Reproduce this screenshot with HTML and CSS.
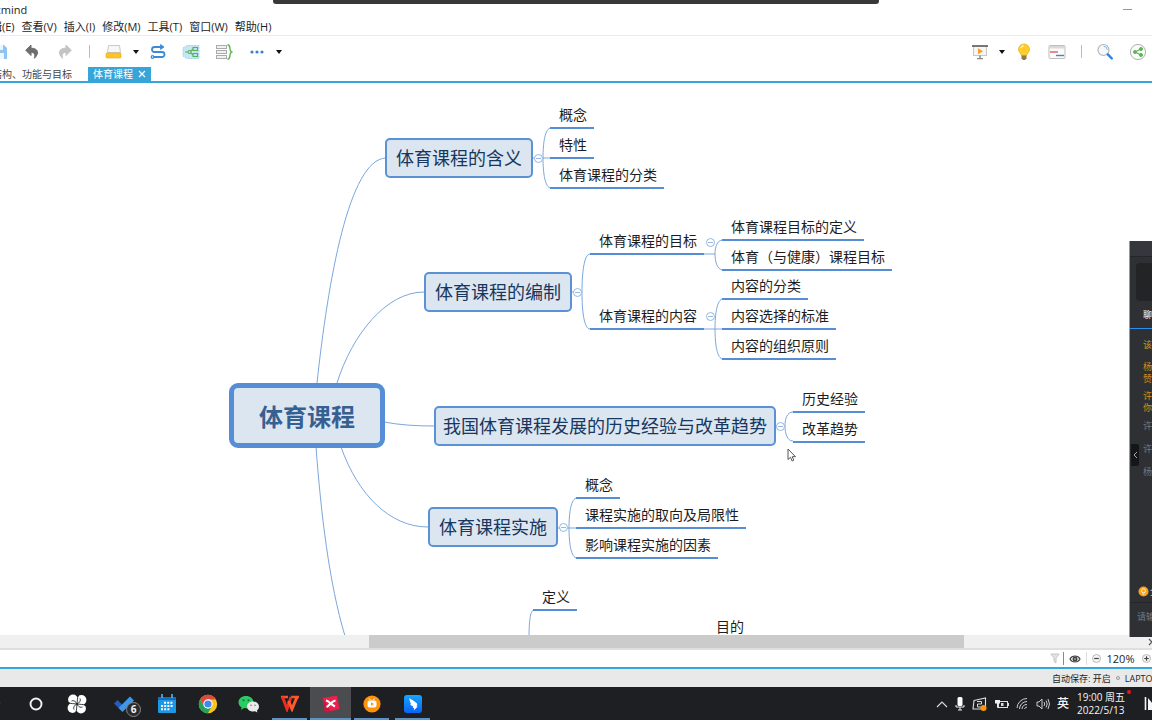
FILE: index.html
```html
<!DOCTYPE html>
<html lang="zh-CN">
<head>
<meta charset="utf-8">
<title>体育课程.xmind</title>
<link rel="stylesheet" href="styles.css">
</head>
<body>
<div class="app">
  <div class="share-bar"></div>
  <header class="titlebar">
    <span class="titlebar-name">xmind</span>
    <button class="win-btn" aria-label="最小化"><span class="win-min"></span></button>
    <button class="win-btn win-btn-edge" aria-label="最大化"><span class="win-max"></span></button>
  </header>

  <nav class="menubar">
    <button>编辑(E)</button><button>查看(V)</button><button>插入(I)</button><button>修改(M)</button><button>工具(T)</button><button>窗口(W)</button><button>帮助(H)</button>
  </nav>

  <div class="toolbar">
    <div class="tools tools-left">
      <button class="tool" aria-label="保存"><svg width="18" height="16" viewBox="0 0 18 16"><path d="M1 1h13l3 3v11H1z" fill="#8fc3f3"/><path d="M4 1h9v5H4zM4 9h10v6H4z" fill="#eef6fd"/></svg></button>
      <button class="tool" aria-label="撤销"><svg width="14" height="15" viewBox="0 0 14 15"><path d="M6 1L.7 6.200 6 11.500V8.300c3.200 0 4.500 2 3.400 6C14.500 9.500 13.500 4.200 6 4.200z" fill="#6e6e6e" stroke="#6e6e6e" stroke-linejoin="round"/></svg></button>
      <button class="tool" aria-label="重做"><svg width="14" height="15" viewBox="0 0 14 15"><path d="M8 1l5.300 5.200L8 11.500V8.300c-3.200 0-4.500 2-3.400 6C-.5 9.500.5 4.200 8 4.200z" fill="#c4c4c4" stroke="#c4c4c4" stroke-linejoin="round"/></svg></button>
      <span class="tool-sep"></span>
      <button class="tool" aria-label="主题"><svg width="18" height="16" viewBox="0 0 18 16"><path d="M3.500 1.500h11l1 7h-13z" fill="#f7f7f7" stroke="#c9c9c9"/><rect x="1" y="9" width="15" height="5" rx="1" fill="#ffc423" stroke="#e5ab1c" stroke-width=".6"/></svg></button>
      <button class="caret" aria-label="更多主题"></button>
      <button class="tool" aria-label="联系"><svg width="18" height="16" viewBox="0 0 18 16" fill="none" stroke="#3c8ad8" stroke-width="1.800"><path d="M14 3H5.500a2.500 2.500 0 000 5H13a2.500 2.500 0 010 5H5"/><path d="M11.500 .5L15 3l-3.500 2.500z" fill="#3c8ad8" stroke-width=".8"/><circle cx="3.500" cy="13" r="1.300" stroke-width="1.200"/></svg></button>
      <button class="tool" aria-label="外框"><svg width="18" height="16" viewBox="0 0 18 16"><path d="M1 4l4-2.500h12v13H5L1 12z" fill="#c6e6f4" stroke="#9ed2ea" stroke-dasharray="2 1"/><g fill="none" stroke="#58b158" stroke-width="1.100"><path d="M3 8h5M8 8l3-3M8 8l3 3"/><rect x="11" y="3.500" width="4.500" height="3"/><rect x="11" y="9.500" width="4.500" height="3"/><circle cx="7.500" cy="8" r="1.500" fill="#c6e6f4"/></g></svg></button>
      <button class="tool" aria-label="概要"><svg width="18" height="16" viewBox="0 0 18 16" fill="none"><g stroke="#aaa" fill="#f1f1f1"><rect x="1.500" y="1.500" width="10" height="3"/><rect x="1.500" y="6.500" width="10" height="3"/><rect x="1.500" y="11.500" width="10" height="3"/></g><path d="M12.500 .8c4 0 1 6 4 7.200-3 1.200 0 7.200-4 7.200" stroke="#62b34f" stroke-width="1.400"/></svg></button>
      <button class="tool" aria-label="更多"><svg width="14" height="4" viewBox="0 0 14 4" fill="#3c7fd6"><circle cx="2" cy="2" r="1.600"/><circle cx="7" cy="2" r="1.600"/><circle cx="12" cy="2" r="1.600"/></svg></button>
      <button class="caret" aria-label="更多工具"></button>
    </div>
    <div class="tools tools-right">
      <button class="tool" aria-label="演示"><svg width="18" height="16" viewBox="0 0 18 16"><rect x="2.500" y="2.500" width="13" height="9" fill="#f6f6f6" stroke="#c8c8c8"/><path d="M1 1h16v2H1z" fill="#777"/><path d="M8.300 11.500h1.500V14H12v1.300H6V14h2.300z" fill="#888"/><path d="M7 4.300l5 3-5 3z" fill="#f2a12c"/></svg></button>
      <button class="caret" aria-label="演示选项"></button>
      <button class="tool" aria-label="头脑风暴"><svg width="14" height="18" viewBox="0 0 14 18"><path d="M7 1a5.500 5.500 0 00-5.500 5.500c0 3 2.700 3.500 2.900 6h5.200c.2-2.500 2.900-3 2.900-6A5.500 5.500 0 007 1z" fill="#ffcd2c" stroke="#e6ae26" stroke-width=".8"/><path d="M4 5c.4-1.400 1.300-2.200 3-2.300" stroke="#fff3b0" fill="none" stroke-width="1.200"/><path d="M4.500 12.500h5v3L8 17H6l-1.500-1.500z" fill="#8b7a4d"/></svg></button>
      <button class="tool" aria-label="甘特图"><svg width="18" height="16" viewBox="0 0 18 16"><rect x="1" y="1.500" width="16" height="13" rx="1" fill="#fafafa" stroke="#bdbdbd"/><path d="M1.500 2h15v2.500h-15z" fill="#d9d9d9"/><path d="M2 8h8" stroke="#e05a5a" stroke-width="1.400"/><path d="M8 11.500h8" stroke="#3f83cf" stroke-width="1.400"/></svg></button>
      <span class="tool-sep"></span>
      <button class="tool" aria-label="搜索"><svg width="18" height="18" viewBox="0 0 18 18"><circle cx="7.500" cy="7" r="5.500" fill="#f4f9fd" stroke="#b5b5b5" stroke-width="1.200"/><path d="M7.500 3.200A4 4 0 0111.300 7" stroke="#7fbbe8" fill="none"/><path d="M11.800 11.300l4 4.200" stroke="#2f83dc" stroke-width="2.400" stroke-linecap="round"/></svg></button>
      <button class="tool" aria-label="分享"><svg width="18" height="18" viewBox="0 0 18 18"><circle cx="9" cy="9" r="7.600" fill="#fafafa" stroke="#b0b0b0"/><g fill="#5cb852" stroke="#5cb852"><path d="M12 6L6 9l6 3" fill="none" stroke-width="1.200"/><circle cx="12" cy="6" r="1.500"/><circle cx="6" cy="9" r="1.500"/><circle cx="12" cy="12" r="1.500"/></g></svg></button>
    </div>
  </div>

  <div class="tabs">
    <button class="tab tab-first">结构、功能与目标</button>
    <button class="tab tab-active">体育课程<svg width="8" height="8" viewBox="0 0 8 8"><path d="M1 1l6 6M7 1L1 7" stroke="#fff" stroke-width="1.200"/></svg></button>
  </div>

  <main class="stage">
    <div class="canvas">
      <svg class="links">
        <path d="M317 300C328 198 349 76 386 75"/>
        <path d="M337 300C352 252 386 209 424 209"/>
        <path d="M384 339C400 342 416 343 434 343"/>
        <path d="M341 364C358 412 390 444 428 444"/>
        <path d="M316 364C321 430 329 500 345 553"/>
        <path d="M533 75H551M551 45C545 45 543 60 543 75S545 105 551 105"/>
        <path d="M572 209H582M590 171C584 171 582 190 582 209S584 246 590 246"/>
        <path d="M703 171H715M723 157C717 157 715 164 715 171S717 187 723 187"/>
        <path d="M703 246H723M723 216C717 216 715 231 715 246S717 276 723 276"/>
        <path d="M775 343H785M793 329C787 329 785 336 785 343S787 358 793 358"/>
        <path d="M558 445H577M577 415C571 415 569 430 569 445S571 475 577 475"/>
        <path d="M534 527C530 527 529 540 529 556"/>
      </svg>
      <div class="root">体育课程</div>

      <div class="topic topic-meaning">体育课程的含义</div>
      <button class="fold fold-meaning" aria-label="折叠"></button>
      <ul class="leaves leaves-meaning"><li>概念</li><li>特性</li><li>体育课程的分类</li></ul>

      <div class="topic topic-design">体育课程的编制</div>
      <button class="fold fold-design" aria-label="折叠"></button>
      <ul class="leaves leaves-goal"><li>体育课程的目标</li></ul>
      <button class="fold fold-goal" aria-label="折叠"></button>
      <ul class="leaves leaves-goal-sub"><li>体育课程目标的定义</li><li>体育（与健康）课程目标</li></ul>
      <ul class="leaves leaves-content"><li>体育课程的内容</li></ul>
      <button class="fold fold-content" aria-label="折叠"></button>
      <ul class="leaves leaves-content-sub"><li>内容的分类</li><li>内容选择的标准</li><li>内容的组织原则</li></ul>

      <div class="topic topic-history">我国体育课程发展的历史经验与改革趋势</div>
      <button class="fold fold-history" aria-label="折叠"></button>
      <ul class="leaves leaves-history"><li>历史经验</li><li>改革趋势</li></ul>

      <div class="topic topic-practice">体育课程实施</div>
      <button class="fold fold-practice" aria-label="折叠"></button>
      <ul class="leaves leaves-practice"><li>概念</li><li>课程实施的取向及局限性</li><li>影响课程实施的因素</li></ul>

      <ul class="leaves leaves-define"><li>定义</li></ul>
      <ul class="leaves leaves-purpose"><li>目的</li></ul>

      <svg class="pointer" width="10" height="14" viewBox="0 0 10 14"><path d="M1 1v10.500l2.500-2.200 1.700 3.700 1.600-.8-1.600-3.500H8.500z" fill="#fff" stroke="#444" stroke-width=".9"/></svg>
    </div>

    <aside class="chat">
      <div class="chat-head"></div>
      <div class="chat-video"></div>
      <div class="chat-tab">聊天</div>
      <div class="chat-list">
        <p class="notice">该</p>
        <p class="notice gap-l">杨</p>
        <p class="notice">赞</p>
        <p class="notice gap-s">许</p>
        <p class="notice">你</p>
        <p class="gap-m">许</p>
        <p class="gap-x">许</p>
        <p class="gap-x">杨</p>
      </div>
      <div class="chat-hint"><svg width="11" height="11" viewBox="0 0 11 11"><circle cx="5.500" cy="5.500" r="5" fill="#f9a11b"/><circle cx="5.500" cy="4.800" r="2" fill="none" stroke="#fff3d0"/><path d="M4.500 8h2" stroke="#fff3d0"/></svg>全</div>
      <div class="chat-input">请输</div>
      <button class="chat-toggle" aria-label="收起"><svg width="5" height="8" viewBox="0 0 5 8"><path d="M4 1L1 4l3 3" fill="none" stroke="#aaa"/></svg></button>
    </aside>
  </main>

  <div class="hscroll">
    <div class="hscroll-thumb"></div>
    <svg class="hscroll-end" width="5" height="8" viewBox="0 0 5 8"><path d="M1 1l3 3-3 3" fill="none" stroke="#555" stroke-width="1.200"/></svg>
  </div>

  <div class="zoombar">
    <button class="filter" aria-label="筛选"><svg width="10" height="11" viewBox="0 0 10 11"><path d="M.8 1h8.400L6 5v5L4 8.500V5z" fill="#e3e3e3" stroke="#c6c6c6"/></svg></button>
    <span class="bar-sep bar-sep-dark"></span>
    <button aria-label="显示"><svg width="12" height="8" viewBox="0 0 12 8"><path d="M1 4c2-4 8-4 10 0-2 4-8 4-10 0z" fill="#fff" stroke="#444" stroke-width="1.200"/><circle cx="6" cy="4" r="2.500" fill="#444"/><circle cx="6" cy="4" r=".7" fill="#fff"/></svg></button>
    <span class="bar-sep"></span>
    <button aria-label="缩小"><svg width="9" height="9" viewBox="0 0 9 9"><circle cx="4.500" cy="4.500" r="4" fill="#f5f5f5" stroke="#aaa" stroke-width=".8"/><path d="M2.200 4.500h4.600" stroke="#444" stroke-width="1.200"/></svg></button>
    <span class="zoom-value">120%</span>
    <button aria-label="放大"><svg width="9" height="9" viewBox="0 0 9 9"><circle cx="4.500" cy="4.500" r="4" fill="#f5f5f5" stroke="#aaa" stroke-width=".8"/><path d="M2.200 4.500h4.600M4.500 2.200v4.600" stroke="#444" stroke-width="1.200"/></svg></button>
  </div>

  <div class="status">
    <span>自动保存: 开启</span>
    <span class="status-dot"></span>
    <span class="status-host">LAPTOP</span>
  </div>

  <footer class="taskbar">
    <div class="apps">
      <button class="app-btn" aria-label="搜索"><svg width="16" height="16" viewBox="0 0 16 16"><circle cx="8" cy="7" r="4.500" fill="none" stroke="#ddd" stroke-width="1.200"/></svg></button>
      <button class="app-btn" aria-label="Cortana"><svg width="14" height="14" viewBox="0 0 14 14"><circle cx="7" cy="7" r="5.500" fill="none" stroke="#f2f2f2" stroke-width="1.900"/></svg></button>
      <button class="app-btn" aria-label="浏览器"><svg width="20" height="20" viewBox="0 0 20 20"><g fill="#fff"><circle cx="6" cy="5.500" r="4.900"/><circle cx="14.500" cy="6" r="4.900"/><circle cx="14" cy="14.500" r="4.900"/><circle cx="5.500" cy="14" r="4.900"/><circle cx="10" cy="10" r="5"/></g><path d="M10 10C10.500 7 10 4.500 11.500 1M10 10c3 .5 5.500 0 9 1.500M10 10c-.5 3 0 5.500-1.500 9M10 10c-3-.5-5.500 0-9-1.500M10 10C9 7.500 6.500 6 4.500 7M10 10c2.500-1 4-3.500 3-5.500M10 10c1 2.500 3.500 4 5.500 3M10 10c-2.500 1-4 3.500-3 5.500" stroke="#1e2024" stroke-width=".9" fill="none"/></svg></button>
      <button class="app-btn app-todo" aria-label="待办"><svg width="22" height="18" viewBox="0 0 22 18"><path d="M1 8.500L4.500 5l5 5L6 13.500z" fill="#1f5fc0"/><path d="M5.500 13L17 1.500 21 5.500 9.500 17z" fill="#3f97ea"/></svg><span class="badge">6</span></button>
      <button class="app-btn" aria-label="日历"><svg width="18" height="20" viewBox="0 0 18 20"><path d="M0 3h18v15a1 1 0 01-1 1H1a1 1 0 01-1-1z" fill="#1c97e4"/><path d="M0 3h18v3H0z" fill="#1470b8"/><path d="M4 0v4M14 0v4" stroke="#58c0f5" stroke-width="1.500"/><path d="M6 8.700h9M3 12h12M3 15.300h9" stroke="#fff" stroke-width="2" stroke-dasharray="2 1.200"/></svg></button>
      <button class="app-btn" aria-label="Chrome"><svg width="20" height="20" viewBox="0 0 20 20"><circle cx="10" cy="10" r="9.200" fill="#fbc31c"/><path d="M2 5.400A9.200 9.200 0 0118 5.500H10L6 12.300z" fill="#dc4a3d"/><path d="M2 5.400A9.200 9.200 0 009.800 19.200L14 12.300 6 12.300z" fill="#23a15d"/><circle cx="10" cy="10" r="4.700" fill="#fff"/><circle cx="10" cy="10" r="3.600" fill="#4486f0"/></svg></button>
      <button class="app-btn" aria-label="微信"><svg width="22" height="18" viewBox="0 0 22 18"><path d="M8 1c4.200 0 7.500 2.700 7.500 6.200S12.200 13.300 8 13.300l-2-.2L3 15l.6-2.700C1.600 11.200.5 9.300.5 7.200.5 3.700 3.800 1 8 1z" fill="#2dcb63"/><circle cx="5.500" cy="5.300" r="1" fill="#14713a"/><circle cx="10.500" cy="5.300" r="1" fill="#14713a"/><path d="M15 6.500c3.500 0 6 2.200 6 5 0 1.700-.8 3-2.100 3.900l.5 2.100-2.400-1.200-2 .2c-3.400 0-6-2.200-6-5s2.600-5 6-5z" fill="#e9e9e9"/><circle cx="13" cy="10.300" r=".8" fill="#777"/><circle cx="17" cy="10.300" r=".8" fill="#777"/></svg></button>
      <button class="app-btn running" aria-label="WPS"><svg width="20" height="17" viewBox="0 0 20 17" fill="none"><path d="M1 2h7M11 2h8" stroke="#ff4f2e" stroke-width="2.500"/><path d="M2.500 2l4.500 12L11 2" stroke="#e92f1e" stroke-width="3"/><path d="M8.500 6l3.500 8 5-12" stroke="#ff5a2c" stroke-width="3"/></svg></button>
      <button class="app-btn current" aria-label="XMind"><svg width="18" height="18" viewBox="0 0 18 18"><path d="M.5 3L15 .5 17.500 14 3 17.500z" fill="#ee1f49"/><path d="M1 4L9 17l-6 .5z" fill="#c91542"/><path d="M4 5.500c3 .3 4 3.500 9 6M4.500 12c3-1 4.500-5.500 9-6.500" fill="none" stroke="#fff" stroke-width="2.200"/></svg></button>
      <button class="app-btn running" aria-label="录屏"><svg width="18" height="18" viewBox="0 0 18 18"><circle cx="9" cy="9" r="8.600" fill="#ff9208"/><path d="M6 3.500l2 2M11.500 3.500l-1.500 2" stroke="#fff"/><rect x="4.500" y="5.500" width="9" height="7" rx="2" fill="#fff"/><path d="M8 7.200l3 1.800-3 1.800z" fill="#ff9208"/></svg></button>
      <button class="app-btn running" aria-label="钉钉"><svg width="18" height="18" viewBox="0 0 18 18"><defs><linearGradient id="ding" x2="0" y2="1"><stop stop-color="#18a6ff"/><stop offset="1" stop-color="#0a63f4"/></linearGradient></defs><rect width="18" height="18" rx="3" fill="url(#ding)"/><path d="M5.500 3c1.500 1.700 5 2.800 7.300 5.300.8 1 .5 1.700-.3 3.200h1.300L9.700 15.500l.5-2.500H8.800l.5-1.500C7.500 11 6.300 9.800 6.200 8.500l1.300.3C6 7.500 5.300 5.500 5.500 3z" fill="#fff"/></svg></button>
    </div>
    <div class="tray">
      <svg width="12" height="8" viewBox="0 0 12 8"><path d="M1 7l5-5 5 5" fill="none" stroke="#ddd" stroke-width="1.100"/></svg>
      <svg width="10" height="15" viewBox="0 0 10 15"><rect x="2.500" y="1" width="5" height="9" rx="1.500" fill="#fff"/><path d="M1 9v2h8V9M5 11v3M3 14h4" fill="none" stroke="#eee"/></svg>
      <svg width="15" height="14" viewBox="0 0 15 14"><path d="M2 3.500L13.500 1v11H1z" fill="none" stroke="#ddd" stroke-width="1.100"/><path d="M5 4.500h4.500v2.500H5.500v3H10" fill="none" stroke="#ddd"/><circle cx="11.500" cy="11" r="3" fill="#ff9500"/></svg>
      <svg width="15" height="12" viewBox="0 0 15 12"><rect x="4.500" y="3.500" width="9" height="6" fill="none" stroke="#ddd"/><path d="M1 2h5v3.500H1z" fill="#eee"/><path d="M3.500 5v4.500h2" stroke="#eee" fill="none"/><path d="M7 5h2.500v3H7z" fill="#ddd"/><path d="M14.500 5v3" stroke="#ddd"/></svg>
      <svg width="13" height="13" viewBox="0 0 13 13" fill="none" stroke="#ccc"><path d="M1 11A10 10 0 0111 1.500M3.500 12A7.500 7.500 0 0111 4.500M6 12a5 5 0 015-4.500M8.500 12a3 3 0 012.500-2"/></svg>
      <svg width="14" height="12" viewBox="0 0 14 12" fill="none" stroke="#ccc"><path d="M1 4h2l3-3v10L3 8H1z"/><path d="M8 4q1.500 2 0 4M10 2.500q2.500 3.500 0 7M12 1q3 5 0 10"/></svg>
      <span class="ime">英</span>
      <div class="clock"><span>19:00 周五</span><span>2022/5/13</span></div>
      <svg class="ntf" width="14" height="16" viewBox="0 0 14 16"><path d="M1.500 1v13" stroke="#f4f4f4" stroke-width="1.600"/><path d="M4 14V2l10 12z" fill="#f4f4f4"/></svg>
    </div>
  </footer>
</div>
</body>
</html>
```
FILE: styles.css
```css
* { box-sizing: border-box; }
body {
  margin: 0;
  font-family: "Open Sans", "Noto Sans CJK SC", sans-serif;
  color: #1d1d1d;
  background: #fff;
}
button {
  margin: 0;
  padding: 0;
  border: 0;
  background: none;
  font: inherit;
  color: inherit;
  white-space: nowrap;
}
svg { display: block; flex: none; }
.app {
  position: relative;
  display: flex;
  flex-direction: column;
  height: 100vh;
  overflow: hidden;
}
.share-bar {
  position: absolute;
  z-index: 2;
  top: 0;
  left: 50%;
  width: 606px;
  height: 4px;
  transform: translateX(-50%);
  border-radius: 0 0 3px 3px;
  background: #38383b;
}

/* Title and menus */
.titlebar {
  display: flex;
  align-items: center;
  height: 19px;
  font-size: 11px;
  line-height: 19px;
}
.titlebar-name { margin-left: -5px; margin-right: auto; }
.win-btn { width: 32px; height: 19px; display: grid; place-items: center; }
.win-btn-edge { margin-right: -12px; margin-left: -11px; justify-items: end; }
.win-btn-edge { padding-right: 5px; }
.win-min { width: 9px; height: 1px; background: #999; }
.win-max { width: 7px; height: 7px; border: 1px solid #222; }
.menubar {
  display: flex;
  gap: 7px;
  height: 17px;
  margin-left: -20px;
  border-bottom: 1px solid #ebebeb;
  font-size: 11px;
  line-height: 16px;
}

/* Toolbar */
.toolbar {
  display: flex;
  justify-content: space-between;
  height: 31px;
  overflow: hidden;
}
.tools { display: flex; align-items: center; gap: 1px; }
.tools-left { margin-left: -17px; }
.tools-right { margin-right: -2px; }
.tool { width: 32px; height: 30px; display: grid; place-items: center; flex: none; }
.tool-sep { width: 14px; height: 13px; flex: none; background: linear-gradient(#bbb, #bbb) center / 1px 100% no-repeat; }
.tools-left .tool-sep { width: 15px; }
.caret { width: 10px; height: 30px; display: grid; place-items: center; }
.caret::before {
  content: "";
  border: 3px solid transparent;
  border-top: 4px solid #111;
  border-bottom: 0;
}

/* Tabs */
.tabs {
  display: flex;
  align-items: flex-end;
  gap: 11px;
  height: 16px;
  border-bottom: 2px solid #37a5d8;
  font-size: 10px;
  line-height: 14px;
}
.tab { height: 14px; padding: 0 5px; }
.tab-first { margin-left: -13px; color: #444; }
.tab-active {
  display: flex;
  align-items: center;
  gap: 5px;
  background: #37a5d8;
  color: #fff;
}

/* Mind map */
.stage { position: relative; flex: 1; min-height: 0; }
.canvas { position: absolute; inset: 0; overflow: hidden; background: #fff; }
.links { position: absolute; inset: 0; width: 100%; height: 100%; }
.links path { fill: none; stroke: #7ba7dc; stroke-width: 1; }
.root, .topic {
  position: absolute;
  display: grid;
  place-items: center;
  background: #dce6f1;
  white-space: nowrap;
}
.root {
  left: 229px;
  top: 300px;
  padding: 0 25px;
  height: 65px;
  border: 5px solid #558ed5;
  border-radius: 9px;
  color: #376092;
  font-size: 24px;
  font-weight: 700;
}
.topic {
  height: 40px;
  padding: 0 9px 2px;
  border: 2px solid #5b92d5;
  border-radius: 5px;
  color: #17375e;
  font-size: 18px;
}
.topic-meaning { left: 385px; top: 55px; }
.topic-design { left: 424px; top: 189px; }
.topic-history { left: 434px; top: 323px; padding: 0 7px 2px; }
.topic-practice { left: 428px; top: 424px; }

.leaves {
  position: absolute;
  display: flex;
  flex-direction: column;
  align-items: flex-start;
  margin: 0;
  padding: 0;
  list-style: none;
  font-size: 14px;
  white-space: nowrap;
}
.leaves li {
  height: 30px;
  padding: 4px 7px 0 9px;
  border-bottom: 2px solid #558ed5;
  line-height: 24px;
}
.leaves-meaning { left: 550px; top: 16px; }
.leaves-goal { left: 590px; top: 142px; }
.leaves-goal-sub { left: 722px; top: 128px; }
.leaves-content { left: 590px; top: 217px; }
.leaves-content-sub { left: 722px; top: 187px; }
.leaves-history { left: 793px; top: 300px; }
.leaves-practice { left: 576px; top: 386px; }
.leaves-define { left: 533px; top: 498px; }
.leaves-purpose { left: 707px; top: 528px; }

.fold {
  position: absolute;
  width: 9px;
  height: 9px;
  display: grid;
  place-items: center;
  border: 1px solid #94b8e3;
  border-radius: 50%;
  background: #fff;
}
.fold::before { content: ""; width: 5px; height: 1px; background: #94b8e3; }
.fold-meaning { left: 534px; top: 71px; }
.fold-design { left: 573px; top: 205px; }
.fold-goal { left: 706px; top: 155px; }
.fold-content { left: 706px; top: 229px; }
.fold-history { left: 776px; top: 339px; }
.fold-practice { left: 559px; top: 440px; }
.pointer { position: absolute; left: 787px; top: 365px; }

/* Chat panel laid over the right edge of the map */
.chat {
  position: absolute;
  z-index: 1;
  right: 0;
  top: 158px;
  bottom: -2px;
  width: 23px;
  display: flex;
  flex-direction: column;
  overflow: hidden;
  border-left: 1px solid #999;
  background: #2e3033;
  color: #77797c;
  font-size: 9px;
  line-height: 12px;
  white-space: nowrap;
}
.chat-head { height: 16px; flex: none; background: #34383d; border-bottom: 1px solid #242629; }
.chat-video { height: 38px; flex: none; margin: 6px 0 0 6px; border-radius: 4px 0 0 4px; background: #222426; }
.chat-tab { height: 28px; flex: none; padding: 8px 0 0 13px; border-bottom: 1px solid #2d8cf0; color: #fff; }
.chat-list { flex: 1; padding: 10px 0 0 13px; }
.chat-list p { margin: 0; }
.chat-list .notice { color: #d98e1b; }
.chat-list .gap-l { margin-top: 10px; }
.chat-list .gap-s { margin-top: 5px; }
.chat-list .gap-m { margin-top: 6px; }
.chat-list .gap-x { margin-top: 11px; }
.chat-hint { display: flex; align-items: center; gap: 1px; height: 21px; padding-left: 8px; color: #ccc; }
.chat-input { height: 35px; padding: 8px 0 0 7px; border-top: 1px solid #242629; }
.chat-toggle {
  position: absolute;
  left: 1px;
  top: 203px;
  width: 8px;
  height: 22px;
  display: grid;
  place-items: center;
  border-radius: 0 2px 2px 0;
  background: #151617;
}

/* Bottom bars */
.hscroll {
  display: flex;
  justify-content: space-between;
  align-items: center;
  height: 15px;
  background: #f0f0f0;
  border-bottom: 2px solid #dfdfdf;
}
.hscroll-thumb { width: 51.700%; height: 13px; margin-left: 32%; background: #cbcbcb; }
.hscroll-end { margin-right: -1px; }
.zoombar {
  display: flex;
  justify-content: flex-end;
  align-items: center;
  gap: 5px;
  height: 19px;
  padding-right: 1px;
  border-bottom: 2px solid #37a5d8;
  font-size: 11px;
}
.bar-sep { width: 1px; height: 13px; background: #ddd; }
.bar-sep-dark { background: #888; }
.zoom-value { width: 29px; margin-right: 2px; text-align: center; }
.filter { margin-right: -2px; }
.status {
  display: flex;
  justify-content: flex-end;
  align-items: center;
  gap: 5px;
  height: 18px;
  overflow: hidden;
  background: #e9e9e9;
  font-size: 9px;
  white-space: nowrap;
}
.status-dot { width: 4px; height: 4px; border: 1px solid #999; border-radius: 50%; }
.status-host { margin-right: -6px; }

/* Taskbar */
.taskbar {
  display: flex;
  justify-content: space-between;
  height: 33px;
  overflow: hidden;
  background: #1d1f23;
  color: #f4f4f4;
}
.apps { display: flex; margin-left: -26px; }
.app-btn {
  position: relative;
  width: 41px;
  height: 33px;
  flex: none;
  display: grid;
  place-items: center;
}
.app-todo { margin-left: 8px; }
.app-todo svg { margin-left: -3px; }
.badge {
  position: absolute;
  right: 5px;
  bottom: 3px;
  width: 15px;
  height: 15px;
  border: 1px solid #888;
  border-radius: 50%;
  background: #2a2b2f;
  font-size: 10px;
  font-weight: 700;
  line-height: 13px;
  text-align: center;
}
.running::after, .current::after {
  content: "";
  position: absolute;
  left: 3px;
  right: 3px;
  bottom: 0;
  height: 2px;
  background: #5f93c4;
}
.current { background: #4b4c50; }
.current::after { left: 0; right: 0; }
.tray { display: flex; align-items: center; gap: 7px; margin-right: -6px; }
.ime { font-size: 12px; font-weight: 500; line-height: 16px; }
.clock {
  position: relative;
  display: flex;
  flex-direction: column;
  width: 50px;
  margin: 0 10px 0 1px;
  font-size: 10px;
  line-height: 13px;
  white-space: nowrap;
}
.clock::after {
  content: "";
  position: absolute;
  right: -4px;
  top: -1px;
  width: 4px;
  height: 4px;
  border-radius: 50%;
  background: #f01414;
}
```
